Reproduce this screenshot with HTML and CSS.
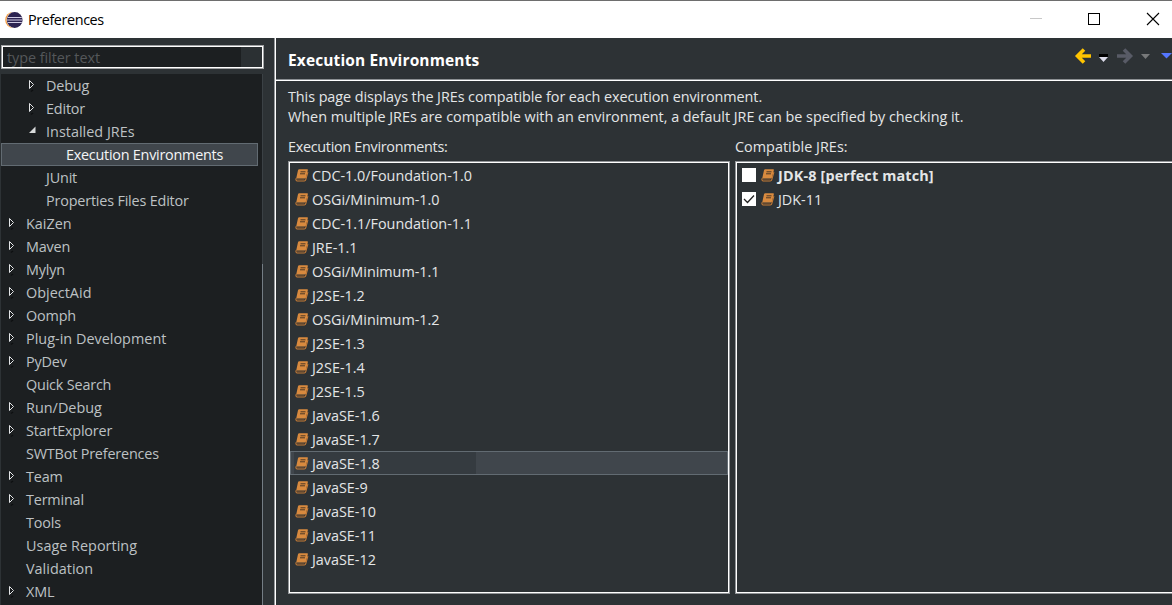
FILE: index.html
```
<!DOCTYPE html>
<html lang="en">
<head>
<meta charset="utf-8">
<title>Preferences</title>
<link rel="stylesheet" href="styles.css">
</head>
<body>
<svg class="defs" aria-hidden="true">
  <symbol id="closed" viewBox="0 0 8 14"><path d="M1.500 1.500v8l4-4z" fill="#15181a" stroke="#e4e6e8"/><path d="M3 12.500l2-1.500" stroke="#0e1011" stroke-width="1.400"/></symbol>
  <symbol id="open" viewBox="0 0 8 14"><path d="M7.500 1.500v6.500H1z" fill="#d8dadb"/></symbol>
  <symbol id="book" viewBox="0 0 14 13">
    <path d="M4.200.3h7.800c.7 0 1 .4.800 1.100L11 8.500c-.2.700-.7 1-1.400 1H1.200L3 1.200C3.200.6 3.600.3 4.200.3z" fill="#d88a3f"/>
    <path d="M1.300 9.200C.6 10.200.9 12 2 12h7.300c.7 0 1.200-.4 1.400-1.100l2.200-7.700" fill="none" stroke="#c87c36" stroke-width="1.100"/>
    <path d="M2 10.500h7.400" stroke="#6a4a2e" stroke-width=".9"/>
    <path d="M5.500 2.800h5M5 4.800h5" stroke="#4e3826" stroke-width="1"/>
  </symbol>
</svg>
<div class="window">
  <header class="titlebar">
    <svg class="logo" viewBox="0 0 18 18">
      <circle cx="8.200" cy="9" r="8" fill="#f39a3d"/>
      <circle cx="9.700" cy="9" r="8.200" fill="#fff"/>
      <circle cx="9.700" cy="9" r="7.900" fill="#2c2350"/>
      <path d="M2.600 6.500h14.200M2 9h15.400M2.600 11.500h14.200" stroke="#cfcbe2" stroke-width="1.200"/>
    </svg>
    <span class="title">Preferences</span>
    <svg class="controls" viewBox="0 0 140 38">
      <path d="M6 18.500h12" stroke="#c8c8c8"/>
      <rect x="64.500" y="13.500" width="11" height="11" fill="none" stroke="#000"/>
      <path d="M123 13l12 12M135 13l-12 12" stroke="#000" stroke-width="1.100"/>
    </svg>
  </header>
  <div class="body">
    <nav class="sidebar">
      <div class="filter"><span>type filter text</span><i></i></div>
      <ul class="tree">
        <li class="l2"><svg><use href="#closed"/></svg><span>Debug</span></li>
        <li class="l2"><svg><use href="#closed"/></svg><span>Editor</span></li>
        <li class="l2"><svg><use href="#open"/></svg><span class="wide">Installed JREs</span></li>
        <li class="l3 selected"><svg></svg><span>Execution Environments</span></li>
        <li class="l2"><svg></svg><span>JUnit</span></li>
        <li class="l2"><svg></svg><span>Properties Files Editor</span></li>
        <li><svg><use href="#closed"/></svg><span class="wide">KaiZen</span></li>
        <li><svg><use href="#closed"/></svg><span>Maven</span></li>
        <li><svg><use href="#closed"/></svg><span>Mylyn</span></li>
        <li><svg><use href="#closed"/></svg><span class="wide">ObjectAid</span></li>
        <li><svg><use href="#closed"/></svg><span>Oomph</span></li>
        <li><svg><use href="#closed"/></svg><span class="wide">Plug-in Development</span></li>
        <li><svg><use href="#closed"/></svg><span>PyDev</span></li>
        <li><svg></svg><span>Quick Search</span></li>
        <li><svg><use href="#closed"/></svg><span class="wide">Run/Debug</span></li>
        <li><svg><use href="#closed"/></svg><span>StartExplorer</span></li>
        <li><svg></svg><span>SWTBot Preferences</span></li>
        <li><svg><use href="#closed"/></svg><span>Team</span></li>
        <li><svg><use href="#closed"/></svg><span>Terminal</span></li>
        <li><svg></svg><span>Tools</span></li>
        <li><svg></svg><span class="wide">Usage Reporting</span></li>
        <li><svg></svg><span class="wide">Validation</span></li>
        <li><svg><use href="#closed"/></svg><span>XML</span></li>
      </ul>
    </nav>
    <main class="page">
      <div class="page-head">
        <h1>Execution Environments</h1>
        <svg class="history" viewBox="0 0 100 41">
          <path d="M19 18H6M12 11.500L5.500 18l6.500 6.500" fill="none" stroke="#ffc400" stroke-width="3.600"/>
          <path d="M27 16h9v3h-9z" fill="#000"/><path d="M27 19h9l-4.500 5z" fill="#dcdcea"/>
          <path d="M45 18h13M52 11.500l6.500 6.500-6.500 6.500" fill="none" stroke="#585b66" stroke-width="3.600"/>
          <path d="M69 16h9l-4.500 5z" fill="#77797a"/>
          <path d="M89 15h11l-5.500 5.500z" fill="#5577ff"/>
        </svg>
      </div>
      <div class="intro"><p class="i1">This page displays the JREs compatible for each execution environment.</p><p class="i2">When multiple JREs are compatible with an environment, a default JRE can be specified by checking it.</p></div>
      <div class="columns">
        <section class="envs">
          <h2>Execution Environments:</h2>
          <ul class="list">
            <li><svg><use href="#book"/></svg><span>CDC-1.0/Foundation-1.0</span></li>
            <li><svg><use href="#book"/></svg><span>OSGi/Minimum-1.0</span></li>
            <li><svg><use href="#book"/></svg><span>CDC-1.1/Foundation-1.1</span></li>
            <li><svg><use href="#book"/></svg><span>JRE-1.1</span></li>
            <li><svg><use href="#book"/></svg><span>OSGi/Minimum-1.1</span></li>
            <li><svg><use href="#book"/></svg><span>J2SE-1.2</span></li>
            <li><svg><use href="#book"/></svg><span>OSGi/Minimum-1.2</span></li>
            <li><svg><use href="#book"/></svg><span>J2SE-1.3</span></li>
            <li><svg><use href="#book"/></svg><span>J2SE-1.4</span></li>
            <li><svg><use href="#book"/></svg><span>J2SE-1.5</span></li>
            <li><svg><use href="#book"/></svg><span>JavaSE-1.6</span></li>
            <li><svg><use href="#book"/></svg><span>JavaSE-1.7</span></li>
            <li class="selected"><svg><use href="#book"/></svg><span>JavaSE-1.8</span></li>
            <li><svg><use href="#book"/></svg><span>JavaSE-9</span></li>
            <li><svg><use href="#book"/></svg><span>JavaSE-10</span></li>
            <li><svg><use href="#book"/></svg><span>JavaSE-11</span></li>
            <li><svg><use href="#book"/></svg><span>JavaSE-12</span></li>
          </ul>
        </section>
        <section class="jres">
          <h2 class="wide">Compatible JREs:</h2>
          <ul class="list checks">
            <li><b class="box"></b><svg><use href="#book"/></svg><span class="match">JDK-8 [perfect match]</span></li>
            <li><b class="box"><svg class="tick" viewBox="0 0 14 14"><path d="M2 7l3.500 3.500L12 3.500" fill="none" stroke="#222" stroke-width="1.300"/></svg></b><svg><use href="#book"/></svg><span>JDK-11</span></li>
          </ul>
        </section>
      </div>
    </main>
  </div>
</div>
</body>
</html>
```
FILE: styles.css
```
* { box-sizing: border-box; }
body { margin: 0; overflow: hidden; font: 14.4px/20px "Segoe UI", "Open Sans", "Noto Sans", sans-serif; letter-spacing: -0.3px; color: #e4e6e7; background: #2d3235; }
ul, h1, h2, p { margin: 0; padding: 0; list-style: none; font-weight: 400; font-size: inherit; }
span, p, h1, h2 { white-space: nowrap; }
svg { display: block; flex: none; }
.defs { position: absolute; width: 0; height: 0; }
.window { width: 1172px; height: 605px; display: flex; flex-direction: column; overflow: hidden; }

.titlebar { height: 38px; flex: none; display: flex; align-items: center; background: #fff; border-top: 1px solid #6e6e6e; color: #000; padding-left: 5px; }
.title { letter-spacing: -0.4px; }
.logo { width: 18px; height: 18px; margin-right: 5px; }
.controls { width: 140px; height: 38px; margin: -1px 8px 0 auto; }

.body { flex: 1; min-height: 0; display: flex; }
.sidebar { width: 276px; flex: none; padding: 7px 0 0 1px; border-right: 1px solid #fff; box-shadow: inset -1px 0 #94979a; display: flex; flex-direction: column; }
.filter { width: 263px; height: 24px; flex: none; border: 1px solid #a0a2a4; box-shadow: inset 0 0 0 1px #fff; background: #1c1f21; display: flex; align-items: center; padding: 0 1px 0 5px; color: #54575a; }
.filter span { padding-top: 2px; letter-spacing: -0.05px; }
.filter i { width: 21px; height: 20px; margin-left: auto; background: #2b3033; }
.tree { width: 262px; flex: 1; min-height: 0; overflow: hidden; margin-top: 5px; background: linear-gradient(#3b4145, #3b4145) right 0 top 0 / 1px 190px no-repeat, linear-gradient(#747d85, #747d85) right 0 bottom 0 / 1px 341px no-repeat, #1c1f21; color: #bdc1c4; letter-spacing: -0.18px; }
.tree li { width: 257px; height: 23px; display: flex; align-items: center; padding-left: 7px; }
.tree svg { width: 8px; height: 14px; margin-right: 10px; }
.tree .l2 { padding-left: 27px; }
.tree .l3 { padding-left: 47px; }
.tree .selected { color: #f4f5f6; padding-left: 46px; background: #40464c; border: 1px solid #626b72; letter-spacing: -0.25px; }
.wide { letter-spacing: 0.02px; }

.page { flex: 1; min-width: 0; display: flex; flex-direction: column; }
.page-head { height: 43px; flex: none; display: flex; padding: 12px 0 0 12px; border-bottom: 1px solid #fff; box-shadow: inset 0 -1px #8b8f92; }
.page-head h1 { font-size: 15.500px; letter-spacing: 0.13px; font-weight: 700; color: #fff; }
.history { width: 100px; height: 41px; margin: -12px 0 0 auto; }
.intro { padding: 6px 0 0 12px; }
.i1 { letter-spacing: -0.07px; }
.i2 { letter-spacing: -0.02px; }
.columns { flex: 1; min-height: 0; display: flex; gap: 5px; padding: 10px 0 11px 12px; }
.envs, .jres { display: flex; flex-direction: column; }
.envs { width: 442px; flex: none; }
.jres { width: 460px; flex: none; }
.columns h2 { height: 24px; }
.list { flex: 1; border: 1px solid #929598; box-shadow: inset 0 0 0 1px #fff; padding: 1px; letter-spacing: -0.02px; }
.list li { height: 24px; display: flex; align-items: center; padding-left: 5px; }
.list span { padding-top: 2px; }
.list svg { width: 14px; height: 13px; margin-right: 3px; }
.list .selected { background: linear-gradient(90deg, #40464c 3px, #353b40 3px, #353b40 185px, #40464c 185px); border: 1px solid #626b72; padding-left: 4px; }
.box { width: 14px; height: 14px; margin-right: 5px; background: #fff; }
.list .tick { width: 14px; height: 14px; }
.list .match { font-weight: 700; letter-spacing: 0.15px; }
```
